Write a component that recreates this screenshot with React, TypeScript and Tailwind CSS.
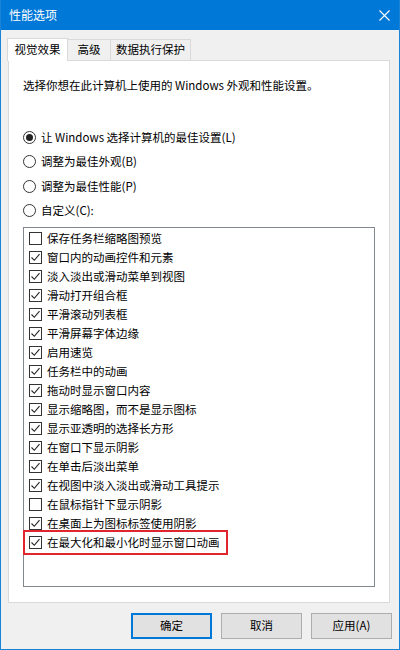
import React from "react";

const FONT = { fontFamily: '"Noto Sans CJK SC", "Noto Sans", sans-serif' };

const ITEMS: { label: string; checked: boolean }[] = [
  { label: "保存任务栏缩略图预览", checked: false },
  { label: "窗口内的动画控件和元素", checked: true },
  { label: "淡入淡出或滑动菜单到视图", checked: true },
  { label: "滑动打开组合框", checked: true },
  { label: "平滑滚动列表框", checked: true },
  { label: "平滑屏幕字体边缘", checked: true },
  { label: "启用速览", checked: true },
  { label: "任务栏中的动画", checked: true },
  { label: "拖动时显示窗口内容", checked: true },
  { label: "显示缩略图，而不是显示图标", checked: true },
  { label: "显示亚透明的选择长方形", checked: true },
  { label: "在窗口下显示阴影", checked: true },
  { label: "在单击后淡出菜单", checked: true },
  { label: "在视图中淡入淡出或滑动工具提示", checked: true },
  { label: "在鼠标指针下显示阴影", checked: false },
  { label: "在桌面上为图标标签使用阴影", checked: true },
  { label: "在最大化和最小化时显示窗口动画", checked: true },
];

const RADIOS = [
  { label: "让 Windows 选择计算机的最佳设置(L)", checked: true },
  { label: "调整为最佳外观(B)", checked: false },
  { label: "调整为最佳性能(P)", checked: false },
  { label: "自定义(C):", checked: false },
];

function Radio({ checked }: { checked: boolean }) {
  return (
    <span className="flex h-[13px] w-[13px] shrink-0 items-center justify-center rounded-full border border-[#333] bg-white">
      {checked && <span className="h-[7px] w-[7px] rounded-full bg-[#222]" />}
    </span>
  );
}

function CheckBox({ checked }: { checked: boolean }) {
  return (
    <span className="flex h-[13px] w-[13px] shrink-0 items-center justify-center border border-[#333] bg-white">
      {checked && (
        <svg width="11" height="11" viewBox="0 0 11 11">
          <path d="M1.5 5.5 L4.3 8.3 L9.5 2.2" fill="none" stroke="#222" strokeWidth="1.1" />
        </svg>
      )}
    </span>
  );
}

function Button({ label, primary }: { label: string; primary?: boolean }) {
  return (
    <button
      type="button"
      className={`flex h-[26px] w-[81px] items-center justify-center bg-[#e1e1e1] text-[11.5px] text-black ${
        primary ? "border-2 border-[#0078d7]" : "border border-[#adadad]"
      }`}
    >
      {label}
    </button>
  );
}

export default function App() {
  return (
    <div
      className="flex h-[650px] w-[400px] flex-col border border-t-0 border-[#1883d7] bg-[#f0f0f0] text-[11.5px] text-black"
      style={FONT}
    >
      {/* title bar */}
      <div className="flex h-[30px] shrink-0 items-center justify-between bg-[#0078d7] pl-[8px] pr-[9px] text-white">
        <span className="text-[12px]">性能选项</span>
        <svg width="11" height="11" viewBox="0 0 11 11">
          <path d="M0.5 0.5 L10.5 10.5 M10.5 0.5 L0.5 10.5" stroke="white" strokeWidth="1.1" />
        </svg>
      </div>

      {/* tabs */}
      <div className="mt-[8px] flex h-[22px] items-end pl-[6px]">
        <div className="relative z-10 -mb-px flex h-[23px] w-[61px] items-center justify-center border border-b-0 border-[#d9d9d9] bg-white">
          视觉效果
        </div>
        <div className="flex h-[21px] w-[43px] items-center justify-center border border-l-0 border-b-0 border-[#d9d9d9] bg-[#f0f0f0]">
          高级
        </div>
        <div className="flex h-[21px] w-[80px] items-center justify-center border border-l-0 border-b-0 border-[#d9d9d9] bg-[#f0f0f0]">
          数据执行保护
        </div>
      </div>

      {/* panel */}
      <div className="ml-[7px] mr-[9px] flex h-[543px] flex-col border border-[#d9d9d9] bg-white px-[14px] pb-[15px]">
        <p className="mt-[16px] leading-[16px]">选择你想在此计算机上使用的 Windows 外观和性能设置。</p>

        <div className="mt-[36px] flex flex-col gap-[8px]">
          {RADIOS.map((r) => (
            <div key={r.label} className="flex h-[16.5px] items-center gap-[5px]">
              <Radio checked={r.checked} />
              <span>{r.label}</span>
            </div>
          ))}
        </div>

        <div className="mt-[8px] flex-1 border border-[#828790] bg-white pt-[1px]">
          {ITEMS.map((it, i) => (
            <div key={it.label} className="relative flex h-[19px] items-center gap-[5px] pl-[5px]">
              <CheckBox checked={it.checked} />
              <span className="whitespace-nowrap">{it.label}</span>
              {i === ITEMS.length - 1 && (
                <span className="pointer-events-none absolute left-[-1px] top-[-3px] h-[25px] w-[205px] border-2 border-[#e0252f]" />
              )}
            </div>
          ))}
        </div>
      </div>

      {/* buttons */}
      <div className="mt-[10px] flex justify-end gap-[9px] pr-[7px]">
        <Button label="确定" primary />
        <Button label="取消" />
        <Button label="应用(A)" />
      </div>
    </div>
  );
}
